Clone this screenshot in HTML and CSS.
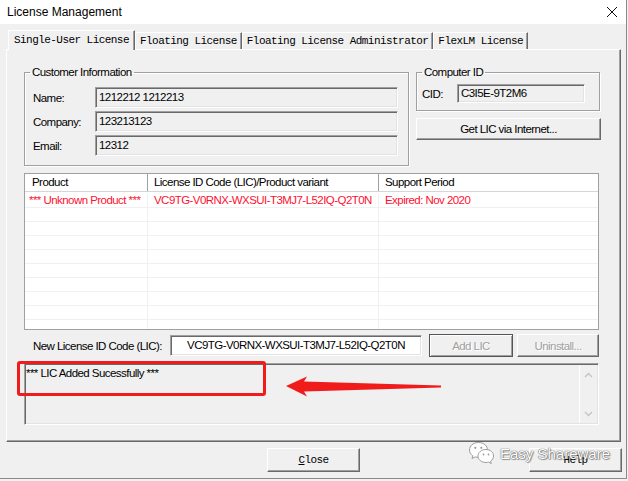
FILE: index.html
```html
<!DOCTYPE html>
<html lang="en">
<head>
  <meta charset="UTF-8" />
  <title>License Management</title>
  <link rel="stylesheet" href="styles.css">
</head>
<body>
<div class="window">

  <div class="titlebar">
    <span class="title">License Management</span>
    <svg class="close-x" width="12" height="12" viewBox="0 0 12 12">
      <path d="M1 1 L11 11 M11 1 L1 11" stroke="#111" stroke-width="1" fill="none"/>
    </svg>
  </div>

  <div class="main">
    <div class="tabs">
      <div class="tab active">Single-User License</div>
      <div class="tab">Floating License</div>
      <div class="tab">Floating License Administrator</div>
      <div class="tab">FlexLM License</div>
    </div>

    <div class="panel">
      <div class="top-row">
        <fieldset class="group customer">
          <legend>Customer Information</legend>
          <div class="field-row"><span class="lbl">Name:</span><div class="edit">1212212 1212213</div></div>
          <div class="field-row"><span class="lbl">Company:</span><div class="edit">123213123</div></div>
          <div class="field-row"><span class="lbl">Email:</span><div class="edit">12312</div></div>
        </fieldset>

        <div class="right-col">
          <fieldset class="group computer">
            <legend>Computer ID</legend>
            <div class="field-row"><span class="lbl cid-lbl">CID:</span><div class="edit cid">C3I5E-9T2M6</div></div>
          </fieldset>
          <div class="btn get-lic">Get LIC via Internet...</div>
        </div>
      </div>

      <div class="list">
        <div class="list-head">
          <div class="cell c1">Product</div>
          <div class="cell c2">License ID Code (LIC)/Product variant</div>
          <div class="cell c3">Support Period</div>
        </div>
        <div class="list-body">
          <div class="row red">
            <div class="cell c1">*** Unknown Product ***</div>
            <div class="cell c2">VC9TG-V0RNX-WXSUI-T3MJ7-L52IQ-Q2T0N</div>
            <div class="cell c3">Expired: Nov 2020</div>
          </div>
          <div class="row"><div class="cell c1"></div><div class="cell c2"></div><div class="cell c3"></div></div>
          <div class="row"><div class="cell c1"></div><div class="cell c2"></div><div class="cell c3"></div></div>
          <div class="row"><div class="cell c1"></div><div class="cell c2"></div><div class="cell c3"></div></div>
          <div class="row"><div class="cell c1"></div><div class="cell c2"></div><div class="cell c3"></div></div>
          <div class="row"><div class="cell c1"></div><div class="cell c2"></div><div class="cell c3"></div></div>
          <div class="row"><div class="cell c1"></div><div class="cell c2"></div><div class="cell c3"></div></div>
          <div class="row"><div class="cell c1"></div><div class="cell c2"></div><div class="cell c3"></div></div>
          <div class="row"><div class="cell c1"></div><div class="cell c2"></div><div class="cell c3"></div></div>
          <div class="row"><div class="cell c1"></div><div class="cell c2"></div><div class="cell c3"></div></div>
        </div>
      </div>

      <div class="lic-row">
        <span class="lic-lbl">New License ID Code (LIC):</span>
        <div class="edit white">VC9TG-V0RNX-WXSUI-T3MJ7-L52IQ-Q2T0N</div>
        <div class="btn default disabled add">Add LIC</div>
        <div class="btn disabled uninstall">Uninstall...</div>
      </div>

      <div class="message">
        <div class="msg-text">*** LIC Added Sucessfully ***</div>
        <div class="scrollbar">
          <svg width="9" height="6" viewBox="0 0 9 6"><path d="M1 5 L4.5 1.5 L8 5" stroke="#c4c4c4" stroke-width="1.4" fill="none"/></svg>
          <svg width="9" height="6" viewBox="0 0 9 6"><path d="M1 1 L4.5 4.5 L8 1" stroke="#c4c4c4" stroke-width="1.4" fill="none"/></svg>
        </div>
      </div>
    </div>

    <div class="footer">
      <div class="btn mono"><u>C</u>lose</div>
      <div class="btn mono">Help</div>
    </div>
  </div>

  <!-- annotations drawn over the dialog -->
  <div class="annot-box"></div>
  <svg class="annot-arrow" width="170" height="32" viewBox="0 0 170 32">
    <polygon points="6,16 27,6.5 24,11.5 161,15.6 161,17.4 24,21.5 27,26.5" fill="#f01c1c"/>
  </svg>

  <div class="watermark">
    <svg width="27" height="24" viewBox="0 0 27 24">
      <path d="M10.5 1.5 C5 1.5 1.5 5 1.5 9 C1.5 11.5 2.8 13.4 4.8 14.8 L4 17.5 L7.2 15.9 C8.3 16.2 9.4 16.4 10.5 16.4 C16 16.4 19.5 13 19.5 9 C19.5 5 16 1.5 10.5 1.5 Z" fill="#fff" stroke="#9c9c9c" stroke-width="1"/>
      <path d="M18 8.5 C13.3 8.5 10 11.5 10 15 C10 18.5 13.3 21.5 18 21.5 C18.9 21.5 19.8 21.3 20.6 21.1 L23.3 22.5 L22.6 20.2 C24.4 19 25.5 17.1 25.5 15 C25.5 11.5 22.5 8.5 18 8.5 Z" fill="#fff" stroke="#9c9c9c" stroke-width="1"/>
      <circle cx="7.3" cy="6.8" r="1.1" fill="#9c9c9c"/>
      <circle cx="13.3" cy="6.8" r="1.1" fill="#9c9c9c"/>
      <circle cx="15.5" cy="13.5" r="0.9" fill="#9c9c9c"/>
      <circle cx="20.5" cy="13.5" r="0.9" fill="#9c9c9c"/>
    </svg>
    <span class="wm-text">Easy Shareware</span>
  </div>

</div>
</body>
</html>
```

FILE: styles.css
```css
html, body {
  margin: 0;
  background: #f0f0f0;
}
.window {
  position: relative;
  width: 627px;
  height: 479px;
  box-sizing: border-box;
  border-right: 1px solid #8a8a8a;
  border-bottom: 1px solid #8a8a8a;
  background: #f0f0f0;
  font-family: "Liberation Sans", Arial, sans-serif;
  font-size: 11.5px;
  letter-spacing: -0.55px;
  color: #000;
}

/* title bar */
.titlebar {
  height: 24px;
  background: #fff;
  display: flex;
  align-items: center;
  justify-content: space-between;
  padding: 0 8px 0 7px;
}
.title {
  font-size: 12px;
  letter-spacing: 0;
  color: #000;
}

/* tabs */
.main {
  padding: 6px 0 0 6px;
}
.tabs {
  display: flex;
  align-items: flex-start;
  height: 19px;
  margin-left: 2px;
  position: relative;
  z-index: 1;
}
.tab {
  box-sizing: border-box;
  height: 17px;
  margin-top: 2px;
  padding: 0 4px;
  line-height: 17px;
  font-family: "Liberation Mono", "Courier New", monospace;
  font-size: 11px;
  letter-spacing: -0.55px;
  border-top: 1px solid #fff;
  border-left: 1px solid #fff;
  border-right: 1px solid #696969;
  box-shadow: inset -1px 0 #a0a0a0;
}
.tab.active {
  height: 20px;
  margin-top: 0;
  padding: 0 5px;
  line-height: 19px;
  background: #f0f0f0;
}

/* tab page */
.panel {
  box-sizing: border-box;
  width: 615px;
  height: 393px;
  padding: 15px 21px 0 17px;
  border-top: 1px solid #fff;
  border-left: 1px solid #fff;
  border-right: 1px solid #696969;
  border-bottom: 1px solid #696969;
  box-shadow: inset -1px -1px #a0a0a0;
}
.top-row {
  display: grid;
  grid-template-columns: 385px 185px;
  column-gap: 7px;
  align-items: start;
}
.group {
  margin: 0;
  border: 1px solid #a0a0a0;
  box-shadow: inset 1px 1px #fff, 1px 1px #fff;
  min-width: 0;
}
.group legend {
  padding: 0 2px;
  line-height: 14px;
}
.customer {
  padding: 8px 10px 9px 8px;
  display: flex;
  flex-direction: column;
  gap: 3px;
}
.customer legend {
  margin-left: -3px;
}
.field-row {
  display: flex;
  align-items: center;
}
.lbl {
  width: 62px;
  line-height: 14px;
}
.computer {
  width: 184px;
  box-sizing: border-box;
  padding: 5px 13px 7px 5px;
}
.cid-lbl {
  width: 35px;
}

/* sunken edit fields */
.edit {
  box-sizing: border-box;
  flex: 1;
  height: 21px;
  padding: 0 3px;
  line-height: 19px;
  border: 1px solid;
  border-color: #a0a0a0 #fff #fff #a0a0a0;
  box-shadow: inset 1px 1px #696969, inset -1px -1px #e3e3e3;
  white-space: nowrap;
  overflow: hidden;
}
.edit.cid {
  height: 19px;
  line-height: 17px;
  flex: none;
  width: 128px;
}
.edit.white {
  flex: none;
  width: 252px;
  background: #fff;
  text-align: center;
}

/* push buttons */
.btn {
  box-sizing: border-box;
  display: flex;
  align-items: center;
  justify-content: center;
  height: 22px;
  border-top: 1px solid #fff;
  border-left: 1px solid #fff;
  border-right: 1px solid #696969;
  border-bottom: 1px solid #696969;
  box-shadow: inset -1px -1px #a0a0a0;
  white-space: nowrap;
}
.get-lic {
  margin-top: 7px;
}
.btn.default {
  border: 1px solid #555;
  box-shadow: inset 1px 1px #fff, inset -1px -1px #a0a0a0;
}
.btn.disabled {
  color: #a0a0a0;
  text-shadow: 1px 1px 0 #fff;
}
.btn.add {
  width: 84px;
  height: 23px;
  margin-left: 7px;
}
.btn.uninstall {
  width: 82px;
  height: 23px;
  margin-left: 4px;
}

/* list view */
.list {
  box-sizing: border-box;
  height: 157px;
  margin-top: 7px;
  overflow: hidden;
  background: #fff;
  border: 1px solid #a0a0a0;
}
.list-head {
  display: flex;
  height: 18px;
  box-sizing: border-box;
  border-bottom: 1px solid #d6d6d6;
  line-height: 17px;
}
.list-head .cell {
  border-right: 1px solid #a0a0a0;
  box-shadow: inset -1px 0 #fff;
  padding-left: 6px;
}
.list-head .c1 {
  padding-left: 7px;
}
.list-body {
  padding-top: 2px;
}
.row {
  display: flex;
  height: 14px;
  box-sizing: border-box;
  border-bottom: 1px solid #f0f0f0;
  line-height: 13px;
}
.row .cell {
  border-right: 1px solid #f0f0f0;
  padding-left: 6px;
}
.row .c1 {
  padding-left: 4px;
}
.cell {
  box-sizing: border-box;
  white-space: nowrap;
  overflow: hidden;
}
.c1 { width: 123px; }
.c2 { width: 231px; }
.c3 { flex: 1; border-right: none !important; }
.row.red {
  color: #ff1030;
}

/* new LIC line */
.lic-row {
  display: flex;
  align-items: center;
  height: 23px;
  margin-top: 4px;
  padding-left: 9px;
}
.lic-lbl {
  width: 137px;
}

/* message box */
.message {
  box-sizing: border-box;
  display: flex;
  height: 62px;
  margin-top: 6px;
  border: 1px solid;
  border-color: #a0a0a0 #fff #fff #a0a0a0;
  box-shadow: inset 1px 1px #696969, inset -1px -1px #e3e3e3;
}
.msg-text {
  flex: 1;
  padding: 2px 1px;
  line-height: 14px;
}
.scrollbar {
  width: 17px;
  margin: 1px 1px 1px 0;
  border-left: 1px solid #fff;
  display: flex;
  flex-direction: column;
  align-items: center;
  justify-content: space-between;
  padding: 7px 0 6px;
}

/* bottom buttons */
.footer {
  display: flex;
  justify-content: space-between;
  margin-top: 6px;
  padding: 0 4px 0 261px;
}
.footer .btn {
  width: 93px;
  height: 24px;
}
.mono {
  font-family: "Liberation Mono", "Courier New", monospace;
  font-size: 11px;
  letter-spacing: -0.6px;
}

/* annotations */
.annot-box {
  position: absolute;
  left: 17px;
  top: 361px;
  width: 249px;
  height: 35px;
  box-sizing: border-box;
  border: 3px solid #f01c1c;
  border-radius: 3px;
}
.annot-arrow {
  position: absolute;
  left: 280px;
  top: 370px;
}
.watermark {
  position: absolute;
  left: 468px;
  top: 441px;
  display: flex;
  align-items: center;
  gap: 5px;
}
.wm-text {
  font-size: 15px;
  letter-spacing: 0;
  color: #fff;
  text-shadow: 0 0 1px #555, 0 0 1px #555, 1px 1px 1px rgba(0, 0, 0, 0.35);
}
```
